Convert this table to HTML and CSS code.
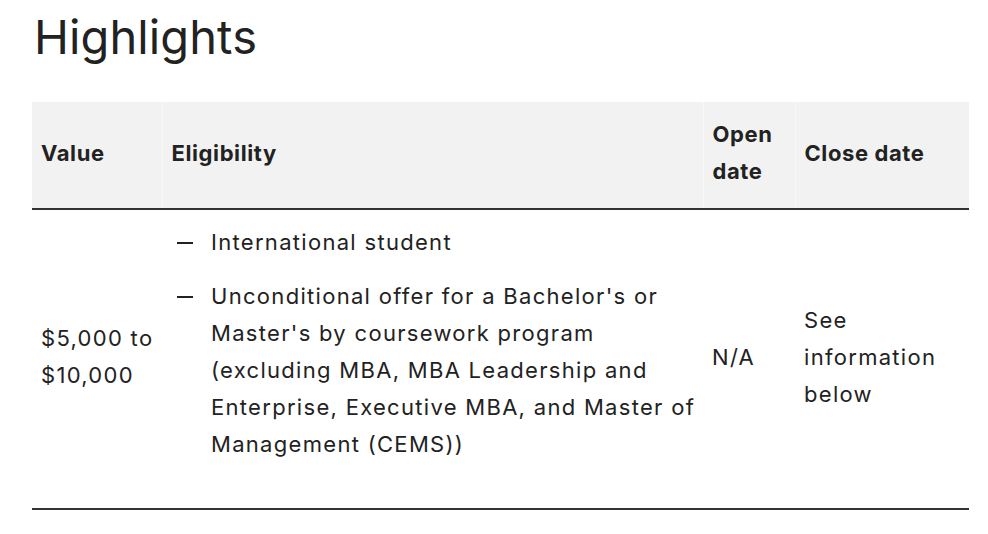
FILE: index.html
```
<!DOCTYPE html>
<html lang="en">
<head>
<meta charset="utf-8">
<title>Highlights</title>
<link rel="stylesheet" href="styles.css">
</head>
<body>
<main class="page">
  <h2 class="title">Highlights</h2>
  <table class="highlights">
    <thead>
      <tr>
        <th class="col-value">Value</th>
        <th class="col-elig">Eligibility</th>
        <th class="col-open">Open date</th>
        <th class="col-close">Close date</th>
      </tr>
    </thead>
    <tbody>
      <tr>
        <td>$5,000 to $10,000</td>
        <td>
          <ul class="dash-list">
            <li>International student</li>
            <li>Unconditional offer for a Bachelor's or Master's by coursework program (excluding MBA, MBA Leadership and Enterprise, Executive MBA, and Master of Management (CEMS))</li>
          </ul>
        </td>
        <td>N/A</td>
        <td>See information below</td>
      </tr>
    </tbody>
  </table>
</main>
</body>
</html>
```
FILE: styles.css
```
html, body {
  margin: 0;
  padding: 0;
  background: #ffffff;
}
body {
  font-family: Inter, "Liberation Sans", sans-serif;
  color: #222222;
}
.page {
  padding: 0 19px 0 32px;
}
.title {
  margin: 0;
  padding: 7px 0 0 2px;
  font-size: 47px;
  font-weight: 400;
  line-height: 60px;
  letter-spacing: 0.1px;
}
.highlights {
  margin-top: 35px;
  width: 937px;
  border-collapse: collapse;
  table-layout: fixed;
  font-size: 22px;
  line-height: 37px;
  letter-spacing: 1.3px;
}
.highlights th,
.highlights td {
  box-sizing: border-box;
}
.highlights th {
  background: #f2f2f2;
  text-align: left;
  font-weight: 700;
  letter-spacing: 0.6px;
  vertical-align: middle;
  padding: 14px 4px 18px 9px;
  height: 106px;
  border-bottom: 2px solid #333333;
  border-left: 1px solid #f8f8f8;
}
.highlights th:first-child { border-left: none; }
.col-value { width: 130px; }
.col-elig { width: 541px; }
.col-open { width: 92px; }
.col-close { width: 174px; }
.highlights td {
  vertical-align: middle;
  padding: 14px 4px 18px 9px;
  border-bottom: 2px solid #333333;
  font-weight: 400;
}
.dash-list {
  list-style: none;
  margin: 0 0 27px;
  padding: 0;
}
.dash-list li {
  position: relative;
  padding-left: 40px;
}
.dash-list li + li {
  margin-top: 17px;
}
.dash-list li::before {
  content: "";
  position: absolute;
  left: 6px;
  top: 18px;
  width: 16px;
  height: 2px;
  background: #222222;
}
```
